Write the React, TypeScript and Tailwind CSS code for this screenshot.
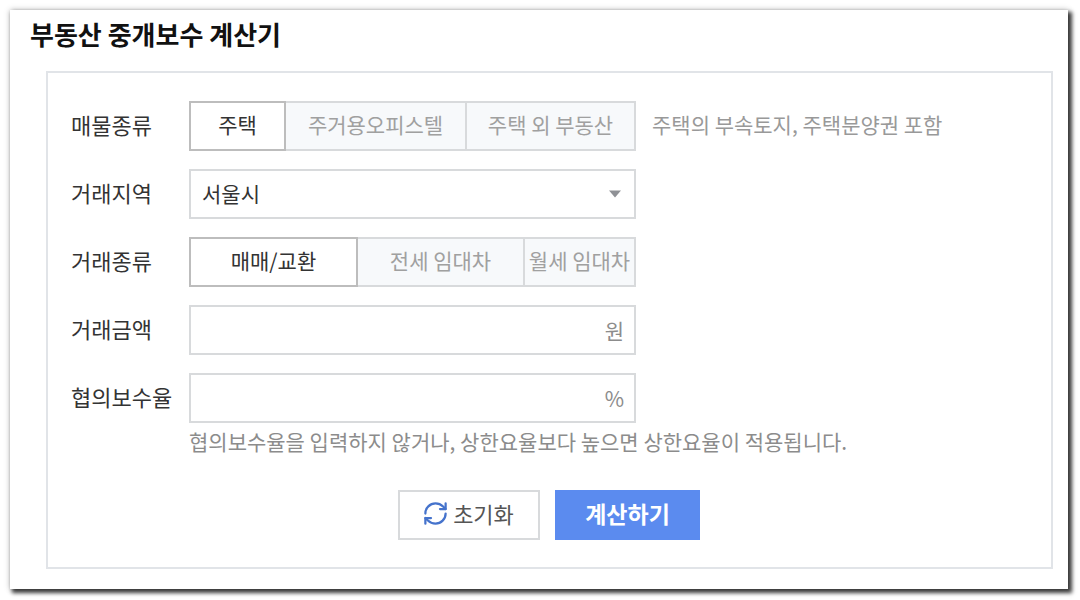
import { useState } from 'react';
import { RefreshCw } from 'lucide-react';

const PROPERTY_TYPES = ['주택', '주거용오피스텔', '주택 외 부동산'];
const DEAL_TYPES = ['매매/교환', '전세 임대차', '월세 임대차'];
const REGIONS = ['서울시', '경기도', '인천시', '부산시'];

type SegmentsProps = {
  labelId: string;
  options: string[];
  value: string;
  columns: string;
  onChange: (value: string) => void;
};

function Segments({ labelId, options, value, columns, onChange }: SegmentsProps) {
  return (
    <div role="group" aria-labelledby={labelId} className={`grid h-[50px] ${columns}`}>
      {options.map((option, i) => (
        <button
          key={option}
          type="button"
          aria-pressed={option === value}
          onClick={() => onChange(option)}
          className={`border-2 pb-1 text-[21px] leading-7 whitespace-nowrap ${i > 0 ? '-ml-0.5' : ''} ${
            option === value
              ? 'relative border-[#bdbdbd] bg-white text-[#333]'
              : 'border-[#d8dadc] bg-[#f7f9fb] text-[#a0a0a0]'
          }`}
        >
          {option}
        </button>
      ))}
    </div>
  );
}

type AmountProps = {
  id: string;
  unit: string;
};

function AmountField({ id, unit }: AmountProps) {
  return (
    <div className="flex h-[50px] items-center border-2 border-[#d8dadc] pr-2.5">
      <input
        id={id}
        type="text"
        inputMode="decimal"
        className="h-full min-w-0 flex-1 px-3 text-[21px] text-[#333] outline-none"
      />
      <span className="text-[21px] leading-7 text-[#8c8c8c]">{unit}</span>
    </div>
  );
}

export default function App() {
  const [propertyType, setPropertyType] = useState(PROPERTY_TYPES[0]);
  const [dealType, setDealType] = useState(DEAL_TYPES[0]);

  const row = 'grid grid-cols-[118px_minmax(0,447px)_1fr] items-center';
  const label = 'pb-1 text-[22px] leading-8 whitespace-nowrap text-[#333]';

  return (
    <main className="bg-white pt-2.5 pr-3 pb-[11px] pl-2.5 font-['Noto_Sans_CJK_KR',sans-serif]">
      <section
        aria-labelledby="title"
        className="bg-white pr-[15px] pb-5 shadow-[3px_3px_4px_1px_rgba(0,0,0,0.75),0_0_6px_rgba(0,0,0,0.25)]"
      >
        <h1 id="title" className="pt-1.5 pb-[19px] pl-5 text-[26px] leading-9 font-bold text-[#111]">
          부동산 중개보수 계산기
        </h1>

        <form
          onSubmit={(e) => e.preventDefault()}
          className="ml-9 border-2 border-[#e1e4e8] pt-7 pr-6 pb-[27px] pl-[23px]"
        >
          <div className="flex flex-col gap-[18px]">
            <div className={row}>
              <span id="property-label" className={label}>
                매물종류
              </span>
              <Segments
                labelId="property-label"
                options={PROPERTY_TYPES}
                value={propertyType}
                columns="grid-cols-[97fr_181fr_169fr]"
                onChange={setPropertyType}
              />
              <p className="pb-1 pl-4 text-[21px] leading-7 text-[#999]">
                주택의 부속토지, 주택분양권 포함
              </p>
            </div>

            <div className={row}>
              <label htmlFor="region" className={label}>
                거래지역
              </label>
              <div className="grid items-center">
                <select
                  id="region"
                  className="col-start-1 row-start-1 h-[50px] w-full appearance-none border-2 border-[#d8dadc] bg-white px-[11px] text-[21px] text-[#333]"
                >
                  {REGIONS.map((region) => (
                    <option key={region}>{region}</option>
                  ))}
                </select>
                <svg
                  viewBox="0 0 14 8"
                  aria-hidden="true"
                  className="pointer-events-none col-start-1 row-start-1 mr-3.5 h-2 w-3.5 justify-self-end fill-[#8f9196]"
                >
                  <path d="M1 0.5h12L7 7.5z" />
                </svg>
              </div>
            </div>

            <div className={row}>
              <span id="deal-label" className={label}>
                거래종류
              </span>
              <Segments
                labelId="deal-label"
                options={DEAL_TYPES}
                value={dealType}
                columns="grid-cols-[169fr_167fr_111fr]"
                onChange={setDealType}
              />
            </div>

            <div className={row}>
              <label htmlFor="price" className={label}>
                거래금액
              </label>
              <AmountField id="price" unit="원" />
            </div>

            <div className={row}>
              <label htmlFor="rate" className={label}>
                협의보수율
              </label>
              <AmountField id="rate" unit="%" />
            </div>
          </div>

          <p className="mt-1 ml-[118px] text-[21px] leading-7 text-[#8c8c8c]">
            협의보수율을 입력하지 않거나, 상한요율보다 높으면 상한요율이 적용됩니다.
          </p>

          {/* Actions */}
          <div className="mt-[35px] flex justify-center gap-[15px]">
            <button
              type="reset"
              className="flex h-[50px] w-[142px] items-center justify-center gap-1 border-2 border-[#d8dadc] bg-white pr-0.5 pb-1 text-[22px] text-[#555]"
            >
              <RefreshCw size={27} strokeWidth={2} className="text-[#4573cc]" aria-hidden="true" />
              초기화
            </button>
            <button
              type="submit"
              className="h-[50px] w-[145px] bg-[#5b8bef] pb-1 text-[23px] font-bold text-white"
            >
              계산하기
            </button>
          </div>
        </form>
      </section>
    </main>
  );
}
